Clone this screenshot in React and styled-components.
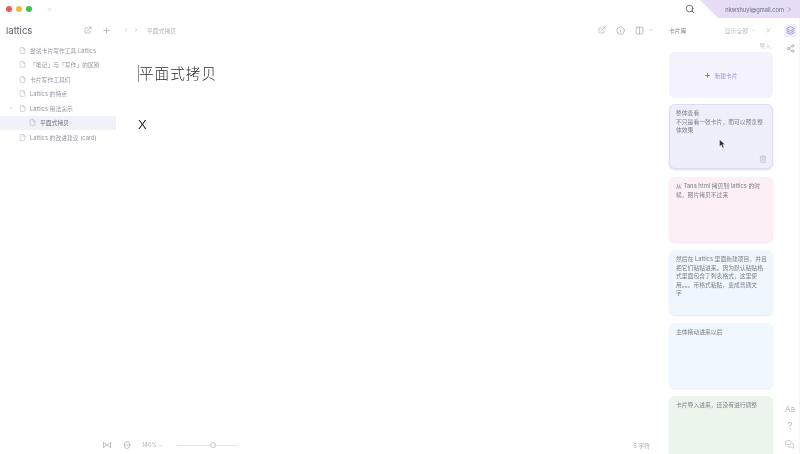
import styled, { createGlobalStyle } from "styled-components";
import {
  ChevronDown,
  ChevronLeft,
  ChevronRight,
  ChevronsRight,
  Columns2,
  ExternalLink,
  File,
  Info,
  Layers,
  MessagesSquare,
  Plus,
  Search,
  Share2,
  Trash2,
  X,
} from "lucide-react";

const GlobalStyle = createGlobalStyle`
  html, body {
    margin: 0;
    padding: 0;
    background: #fff;
  }
  * {
    box-sizing: border-box;
  }
`;

const Page = styled.div`
  width: 800px;
  height: 454px;
  overflow: hidden;
  display: flex;
  flex-direction: column;
  background: #fff;
  color: #8b8f99;
  font-family: Inter, "Noto Sans CJK SC", sans-serif;
  font-size: 5.8px;
  filter: blur(0.35px);
`;

const TitleBar = styled.div`
  height: 18px;
  flex: none;
  display: flex;
  align-items: center;
  padding-left: 6px;
`;

const Light = styled.span`
  width: 6px;
  height: 6px;
  border-radius: 50%;
  margin-right: 4px;
  background: ${(p) => p.$color};
`;

const Collapse = styled.span`
  margin-left: 10px;
  display: flex;
  color: #c3c5cc;
`;

const TitleRight = styled.div`
  margin-left: auto;
  display: flex;
  align-items: center;
  height: 100%;
  color: #555;
`;

const Account = styled.div`
  width: 100px;
  height: 18px;
  margin-left: 5px;
  padding-right: 7px;
  display: flex;
  align-items: center;
  justify-content: flex-end;
  gap: 2px;
  background: #e6dcf6;
  clip-path: polygon(0 0, 100% 0, 100% 100%, 18px 100%);
  color: #6d6a7c;
  font-size: 5.7px;
`;

const Body = styled.div`
  flex: 1;
  min-height: 0;
  display: flex;
`;

const Sidebar = styled.aside`
  width: 116px;
  flex: none;
  display: flex;
  flex-direction: column;
`;

const SideHead = styled.div`
  height: 24px;
  flex: none;
  padding: 0 5.5px 0 6px;
  display: flex;
  align-items: center;
  justify-content: space-between;
  font-size: 9.5px;
  color: #5d6068;
`;

const SideTools = styled.div`
  display: flex;
  align-items: center;
  gap: 10px;
  color: #a4a7af;
`;

const Tree = styled.div`
  margin-top: 1px;
  display: flex;
  flex-direction: column;
`;

const Row = styled.div`
  height: 14.5px;
  display: flex;
  align-items: center;
  padding-left: ${(p) => (p.$child ? 29 : 19)}px;
  gap: 4px;
  white-space: nowrap;
  position: relative;
  background: ${(p) => (p.$active ? "#f1f1fa" : "transparent")};
  color: ${(p) => (p.$active ? "#6f727c" : "#93969f")};
  svg {
    color: #b4b7c0;
    flex: none;
  }
`;

const Caret = styled.span`
  position: absolute;
  left: 8px;
  top: 4px;
  display: flex;
`;

const Main = styled.main`
  flex: 1;
  min-width: 0;
  display: flex;
  flex-direction: column;
`;

const MainBar = styled.div`
  height: 24px;
  flex: none;
  display: flex;
  align-items: center;
  padding: 0 6px 0 7px;
  color: #a8abb3;
`;

const NextArrow = styled.span`
  margin-left: 4px;
  display: flex;
`;

const Crumb = styled.span`
  margin-left: 8px;
  color: #b0b3ba;
`;

const BarRight = styled.div`
  margin-left: auto;
  display: flex;
  align-items: center;
  gap: 10px;
`;

const Split = styled.span`
  display: flex;
  align-items: center;
  gap: 4px;
`;

const Editor = styled.div`
  flex: 1;
  padding: 21px 0 0 23px;
  color: #2b2b2b;
`;

const Heading = styled.h1`
  margin: 0;
  height: 24px;
  padding-left: 0;
  font-size: 14.6px;
  line-height: 22px;
  letter-spacing: 1px;
  font-weight: 300;
  position: relative;
  &::before {
    content: "";
    position: absolute;
    left: -1px;
    top: 2px;
    width: 1px;
    height: 17px;
    background: #8f8f8f;
  }
`;

const Para = styled.p`
  margin: 30px 0 0 -1px;
  font-size: 13px;
  line-height: 16px;
  font-family: "Liberation Sans", sans-serif;
`;

const Footer = styled.div`
  height: 18px;
  flex: none;
  margin-left: -13px;
  display: flex;
  align-items: center;
  padding: 0 10px 0 0;
  color: #c2c4ca;
`;

const PageIcon = styled.svg`
  margin-left: 12px;
`;

const Zoom = styled.span`
  margin-left: 11px;
  display: flex;
  align-items: center;
  gap: 1px;
  font-size: 5.6px;
  color: #b0b3ba;
`;

const Slider = styled.div`
  margin-left: 14px;
  width: 60px;
  height: 1px;
  background: #e3e4e8;
  position: relative;
`;

const Knob = styled.span`
  position: absolute;
  left: 33px;
  top: -3px;
  width: 6px;
  height: 6px;
  border-radius: 50%;
  background: #fff;
  border: 1px solid #c5c7cd;
`;

const Count = styled.span`
  margin-left: auto;
  font-size: 5.8px;
  color: #a8abb3;
`;

const CardPanel = styled.section`
  width: 120px;
  flex: none;
  padding: 0 7px 0 9px;
  display: flex;
  flex-direction: column;
  overflow: hidden;
`;

const PanelHead = styled.div`
  height: 24px;
  flex: none;
  display: flex;
  align-items: center;
  color: #7e818a;
`;

const PanelFilter = styled.div`
  margin-left: auto;
  margin-right: 1px;
  display: flex;
  align-items: center;
  gap: 3px;
  color: #b9bcc3;
  svg:last-child {
    margin-left: 6px;
  }
`;

const ImportLink = styled.div`
  height: 10px;
  flex: none;
  align-self: flex-end;
  margin-right: 2px;
  line-height: 7px;
  color: #c2c4cb;
`;

const NewCard = styled.button`
  height: 46px;
  flex: none;
  border: 0;
  padding: 0;
  border-radius: 6px;
  background: #f3f2fd;
  display: flex;
  align-items: center;
  justify-content: center;
  gap: 3px;
  font: inherit;
  color: #9d8fdc;
  svg {
    color: #7f6bd2;
  }
`;

const Card = styled.article`
  height: 65px;
  flex: none;
  margin-top: ${(p) => p.$gap}px;
  padding: 4px 6px;
  border-radius: 6px;
  background: ${(p) => p.$bg};
  border: 1px solid ${(p) => p.$line};
  box-shadow: 0 1px 2px ${(p) => p.$shadow};
  line-height: 8.6px;
  white-space: nowrap;
  color: #7b7d87;
  position: relative;
`;

const CardTrash = styled.span`
  position: absolute;
  right: 5px;
  bottom: 5px;
  display: flex;
  color: #b9bac4;
`;

const Pointer = styled.svg`
  position: absolute;
  left: 49px;
  top: 34px;
`;

const Rail = styled.nav`
  width: 20px;
  flex: none;
  padding: 6px 3px 5px 4px;
  display: flex;
  flex-direction: column;
  align-items: center;
  color: #a3a6ae;
  border-right: 1px solid #f6f6f8;
`;

const RailActive = styled.span`
  width: 13px;
  height: 13px;
  display: flex;
  align-items: center;
  justify-content: center;
  border-radius: 3px;
  background: #f1effc;
  color: #8b7fd0;
`;

const RailShare = styled.span`
  margin-top: 7px;
  display: flex;
`;

const RailBottom = styled.div`
  margin-top: auto;
  display: flex;
  flex-direction: column;
  align-items: center;
  gap: 7px;
  color: #b6b9c0;
  svg {
    margin-top: 2px;
  }
`;

const Glyph = styled.span`
  font-size: ${(p) => p.$size}px;
  line-height: 10px;
`;

const files = [
  { name: "尝试卡片写作工具 Lattics" },
  { name: "「笔记」与「写作」的区别" },
  { name: "卡片写作工具们" },
  { name: "Lattics 的特点" },
  { name: "Lattics 用法演示", open: true },
  { name: "平面式拷贝", child: true, active: true },
  { name: "Lattics 的改进建议 (card)" },
];

const cards = [
  {
    bg: "#eeeffb",
    line: "#dcdcf4",
    shadow: "#dcdcf4",
    gap: 6,
    lines: ["整体查看", "不只是看一张卡片，而可以预览整", "体效果"],
    hover: true,
  },
  {
    bg: "#fdeff6",
    line: "#fdeff6",
    shadow: "#f6dfe9",
    gap: 8,
    lines: ["从 Tana html 拷贝到 lattics 的时", "候，图片拷贝不过来"],
  },
  {
    bg: "#eff7fd",
    line: "#eff7fd",
    shadow: "#dfebf4",
    gap: 8,
    lines: [
      "然后在 Lattics 里面新建项目，并且",
      "把它们粘贴进来。因为默认粘贴格",
      "式里面包含了列表格式，这里使",
      "用。。。带格式粘贴，变成普通文",
      "字",
    ],
  },
  {
    bg: "#f0f7fe",
    line: "#f0f7fe",
    shadow: "#e2edf7",
    gap: 8,
    lines: ["主体拖动进来以后"],
  },
  {
    bg: "#ecf5ec",
    line: "#ecf5ec",
    shadow: "#e0ece0",
    gap: 8,
    lines: ["卡片导入进来，还没有进行调整"],
  },
];

export default function App() {
  return (
    <>
      <GlobalStyle />
      <Page>
        <TitleBar>
          <Light $color="#ee5a52" />
          <Light $color="#f5b83d" />
          <Light $color="#3fc24f" />
          <Collapse>
            <ChevronsRight size={7} />
          </Collapse>
          <TitleRight>
            <Search size={10} />
            <Account>
              nkwshuyi@gmail.com
              <ChevronRight size={7} />
            </Account>
          </TitleRight>
        </TitleBar>
        <Body>
          <Sidebar>
            <SideHead>
              lattics
              <SideTools>
                <ExternalLink size={8} />
                <Plus size={9} />
              </SideTools>
            </SideHead>
            <Tree>
              {files.map((f) => (
                <Row key={f.name} $child={f.child} $active={f.active}>
                  {f.open && (
                    <Caret>
                      <ChevronDown size={6} />
                    </Caret>
                  )}
                  <File size={7} />
                  {f.name}
                </Row>
              ))}
            </Tree>
          </Sidebar>
          <Main>
            <MainBar>
              <ChevronLeft size={6} />
              <NextArrow>
                <ChevronRight size={6} />
              </NextArrow>
              <Crumb>平面式拷贝</Crumb>
              <BarRight>
                <ExternalLink size={8} />
                <Info size={9} />
                <Split>
                  <Columns2 size={9} />
                  <ChevronDown size={6} />
                </Split>
              </BarRight>
            </MainBar>
            <Editor>
              <Heading>平面式拷贝</Heading>
              <Para>X</Para>
            </Editor>
            <Footer>
              <svg width="8" height="8" viewBox="0 0 8 8" fill="none" stroke="currentColor" strokeWidth="1">
                <path d="M0.5 1 L0.5 7 M7.5 1 L7.5 7 M0.5 1.5 L7.5 6.5 M7.5 1.5 L0.5 6.5" />
              </svg>
              <PageIcon width="8" height="8" viewBox="0 0 8 8" fill="none" stroke="currentColor" strokeWidth="1">
                <rect x="1.5" y="0.5" width="5" height="7" rx="2.5" />
                <path d="M0.5 4 L7.5 4" />
              </PageIcon>
              <Zoom>
                140%
                <ChevronDown size={5} />
              </Zoom>
              <Slider>
                <Knob />
              </Slider>
              <Count>6 字符</Count>
            </Footer>
          </Main>
          <CardPanel>
            <PanelHead>
              卡片库
              <PanelFilter>
                显示全部
                <ChevronDown size={5} />
                <X size={7} />
              </PanelFilter>
            </PanelHead>
            <ImportLink>导入</ImportLink>
            <NewCard>
              <Plus size={7} strokeWidth={3} />
              新建卡片
            </NewCard>
            {cards.map((c) => (
              <Card key={c.lines[0]} $bg={c.bg} $line={c.line} $shadow={c.shadow} $gap={c.gap}>
                {c.lines.map((l) => (
                  <div key={l}>{l}</div>
                ))}
                {c.hover && (
                  <>
                    <Pointer width="7" height="10" viewBox="0 0 7 10">
                      <path d="M0.5 0.5 L0.5 7.5 L2.3 6 L3.6 9 L5 8.4 L3.8 5.6 L6 5.4 Z" fill="#333" stroke="#fff" strokeWidth="0.4" />
                    </Pointer>
                    <CardTrash>
                      <Trash2 size={8} />
                    </CardTrash>
                  </>
                )}
              </Card>
            ))}
          </CardPanel>
          <Rail>
            <RailActive>
              <Layers size={9} />
            </RailActive>
            <RailShare>
              <Share2 size={9} />
            </RailShare>
            <RailBottom>
              <Glyph $size={8}>Aa</Glyph>
              <Glyph $size={9}>?</Glyph>
              <MessagesSquare size={9} />
            </RailBottom>
          </Rail>
        </Body>
      </Page>
    </>
  );
}
